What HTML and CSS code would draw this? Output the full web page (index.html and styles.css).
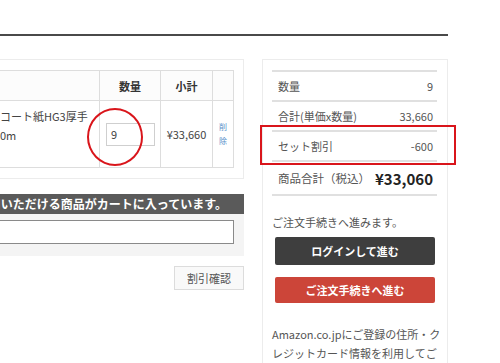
FILE: index.html
```html
<!DOCTYPE html>
<html lang="ja">
<head>
  <meta charset="UTF-8">
  <title>ショッピングカート</title>
  <link rel="stylesheet" href="styles.css">
</head>
<body>
  <div class="page">
    <div class="heading"></div>

    <div class="columns">
      <!-- Cart items -->
      <div class="cart">
        <div class="card">
          <table class="items">
            <colgroup>
              <col>
              <col class="col-qty">
              <col class="col-sub">
              <col class="col-del">
            </colgroup>
            <tr>
              <th></th>
              <th>数量</th>
              <th>小計</th>
              <th></th>
            </tr>
            <tr>
              <td class="name">コート紙HG3厚手<br>0m</td>
              <td class="qty"><input type="text" value="9"></td>
              <td class="sub">¥33,660</td>
              <td class="del"><a href="#">削除</a></td>
            </tr>
          </table>
        </div>

        <div class="notice"><span>セット割引をご利用いただける商品がカートに入っています。</span></div>
        <div class="coupon">
          <input type="text">
        </div>
        <div class="coupon-actions">
          <button class="check-button">割引確認</button>
        </div>
      </div>

      <!-- Summary -->
      <div class="summary">
        <ul class="totals">
          <li><span>数量</span><span>9</span></li>
          <li><span>合計(単価x数量)</span><span>33,660</span></li>
          <li><span>セット割引</span><span>-600</span></li>
          <li class="grand"><span>商品合計（税込）</span><strong>¥33,060</strong></li>
        </ul>
        <p class="lead">ご注文手続きへ進みます。</p>
        <button class="btn btn-dark">ログインして進む</button>
        <button class="btn btn-red">ご注文手続きへ進む</button>
        <p class="note">Amazon.co.jpにご登録の住所・クレジットカード情報を利用してご注文いただけます。</p>
      </div>
    </div>

    <!-- annotation marks -->
    <div class="mark-circle"></div>
    <div class="mark-box"></div>
  </div>
</body>
</html>
```

FILE: styles.css
```css
:root {
  --text: #444444;
  --border: #dddddd;
  --card-border: #ececec;
  --dark: #3e3e3e;
  --red: #cc4539;
  --mark: #d9151b;
}

body {
  margin: 0;
  overflow: hidden;
  background: #ffffff;
  font-family: "Noto Sans CJK JP", "Noto Sans", sans-serif;
  font-size: 11px;
  color: var(--text);
}

.page {
  position: relative;
  height: 363px;
}

/* Header rule */
.heading {
  width: 448px;
  height: 34px;
  border-bottom: 2px solid #4a4a4a;
}

.columns {
  display: flex;
  gap: 18px;
  margin-top: 23px;
}

/* Cart column */
.cart {
  width: 244px;
}

.card {
  border: 1px solid var(--card-border);
  border-left: none;
  padding: 10px 9px 10px 0;
}

.items {
  width: 234px;
  border-collapse: collapse;
  table-layout: fixed;
}

.col-qty { width: 61px; }
.col-sub { width: 52px; }
.col-del { width: 21px; }

.items th,
.items td {
  border: 1px solid var(--border);
  padding: 0;
}

.items th:first-child,
.items td:first-child {
  border-left: none;
}

.items th {
  height: 29px;
  font-weight: bold;
  color: #333333;
  background: #fcfcfc;
}

.items td {
  height: 66px;
}

.items td.name {
  height: 60px;
  padding-top: 6px;
  line-height: 19px;
  vertical-align: top;
  white-space: nowrap;
}

.items td.qty {
  padding-left: 6px;
}

.qty input {
  width: 49px;
  height: 23px;
  box-sizing: border-box;
  border: 1px solid #cfcfcf;
  padding: 0 4px;
  font: inherit;
  color: var(--text);
}

.sub {
  text-align: center;
}

.items td.del {
  text-align: center;
  padding: 0 6px;
}

.del a {
  display: block;
  font-size: 8px;
  line-height: 14px;
  color: #5b8fc9;
  text-decoration: none;
}

/* Set discount notice */
.notice {
  display: flex;
  justify-content: flex-end;
  overflow: hidden;
  margin-top: 15px;
  height: 20px;
  padding-right: 17px;
  background: #5a5a5a;
  color: #ffffff;
  font-size: 12px;
  font-weight: bold;
  line-height: 20px;
  white-space: nowrap;
}

.coupon {
  background: #f4f4f4;
  padding: 6px 10px 12px 0;
}

.coupon input {
  display: block;
  width: 100%;
  height: 24px;
  box-sizing: border-box;
  border: 1px solid #8a8a8a;
  border-left: none;
  background: #ffffff;
}

.coupon-actions {
  display: flex;
  justify-content: flex-end;
  margin-top: 10px;
}

.check-button {
  width: 70px;
  height: 24px;
  border: 1px solid #dcdcdc;
  background: #f9f9f9;
  font: inherit;
  color: #555555;
}

/* Summary column */
.summary {
  width: 186px;
  box-sizing: border-box;
  border: 1px solid var(--card-border);
  padding: 10px 10px 0 9px;
  height: 320px;
}

.totals {
  list-style: none;
  margin: 0;
  padding: 0;
  border-bottom: 2px solid #e0e0e0;
}

.totals li {
  display: flex;
  justify-content: space-between;
  align-items: center;
  height: 28px;
  padding: 0 4px 0 6px;
  border-top: 2px solid #e0e0e0;
  color: #555555;
}

.totals li.grand {
  height: 32px;
  font-size: 11.5px;
}

.totals strong {
  font-size: 15px;
  color: #222222;
}

.lead {
  margin: 18px 0 0;
  line-height: 16px;
  color: #555555;
}

.btn {
  display: block;
  width: 160px;
  margin-left: 3px;
  border: none;
  border-radius: 2px;
  font: inherit;
  font-weight: bold;
  color: #ffffff;
}

.btn-dark {
  margin-top: 7px;
  height: 28px;
  background: var(--dark);
}

.btn-red {
  margin-top: 12px;
  height: 26px;
  background: var(--red);
}

.note {
  margin: 22px -6px 0 0;
  line-height: 19px;
  color: #555555;
}

/* Red annotation marks drawn over the page */
.mark-circle {
  position: absolute;
  left: 87px;
  top: 108px;
  width: 56px;
  height: 58px;
  box-sizing: border-box;
  border: 2px solid var(--mark);
  border-radius: 50%;
}

.mark-box {
  position: absolute;
  left: 260px;
  top: 125px;
  width: 196px;
  height: 40px;
  box-sizing: border-box;
  border: 2px solid var(--mark);
}
```
